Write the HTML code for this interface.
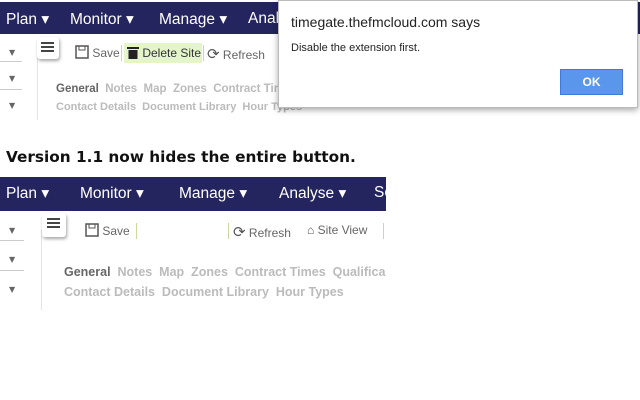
<!DOCTYPE html>
<html><head><meta charset="utf-8"><style>
*{margin:0;padding:0;box-sizing:border-box}
body{width:640px;height:400px;background:#fff;position:relative;overflow:hidden;font-family:"DejaVu Sans","Liberation Sans",sans-serif}
.a{position:absolute;white-space:nowrap}
.nav{background:#24245e;color:#fff;font-size:15px}
.nav span{position:absolute;top:8px;font-family:"Liberation Sans",sans-serif;font-size:15.5px}
.tb{font-size:12px;color:#666;font-family:"Liberation Sans",sans-serif}
.tab{font-size:11.5px;font-weight:bold;color:#bbb;font-family:"Liberation Sans",sans-serif}
.dd{color:#666;font-size:8px}
.ln{background:#ccc;height:1px;width:60px}
.ham{border-radius:3px;box-shadow:1px 2px 3px rgba(0,0,0,.35);background:#fff}
.ham i{display:block;width:13px;height:2px;background:#444;margin:2px 0 0 0}
.sep{width:1px;height:16px;background:#c9d9a0}
</style></head><body>
<div class="a nav" style="left:0;top:2px;width:640px;height:32px">
<span style="left:6px">Plan ▾</span><span style="left:70px">Monitor ▾</span><span style="left:159px">Manage ▾</span><span style="left:248px">Analyse</span>
</div>
<div class="a" style="left:0;top:34px;width:38px;height:90px">
<div class="a dd" style="left:9px;top:14px">▼</div><div class="a ln" style="left:0;top:27px;width:22px"></div>
<div class="a dd" style="left:9px;top:40px">▼</div><div class="a ln" style="left:0;top:55px;width:22px"></div>
<div class="a dd" style="left:9px;top:67px">▼</div>
</div>
<div class="a" style="left:37px;top:54px;width:1px;height:66px;background:#e5e5e5"></div>
<div class="a ham" style="left:37px;top:37px;width:22px;height:22px;padding:3px 4px"><i></i><i></i><i></i></div>
<div class="a tb" style="left:75px;top:45px"><svg width="14" height="14" style="vertical-align:-2px"><rect x="1" y="1" width="12" height="12" fill="none" stroke="#555" stroke-width="1.5"/><rect x="4" y="1" width="6" height="4" fill="none" stroke="#555"/></svg> Save</div>
<div class="a sep" style="left:121px;top:45px"></div>
<div class="a" style="left:124px;top:43px;width:78px;height:20px;background:#e3f5c9"></div>
<div class="a tb" style="left:127px;top:46px;color:#333"><svg width="12" height="13" style="vertical-align:-2px"><rect x="0" y="1" width="12" height="2" fill="#222"/><rect x="1.5" y="4" width="9" height="9" fill="#222"/></svg> Delete Site</div>
<div class="a sep" style="left:203px;top:45px"></div>
<div class="a tb" style="left:207px;top:45px"><span style="font-size:15px;color:#555">⟳</span> Refresh</div>
<div class="a tab" style="left:56px;top:83px"><span style="color:#666">General</span>&nbsp; Notes&nbsp; Map&nbsp; Zones&nbsp; Contract Times</div>
<div class="a tab" style="left:56px;top:101px;font-size:11px">Contact Details&nbsp; Document Library&nbsp; Hour Types</div>
<div class="a" style="left:278px;top:0;width:360px;height:108px;background:#fff;border:1px solid #bbb;box-shadow:0 2px 6px rgba(0,0,0,.35)">
<div class="a" style="left:12px;top:13px;font-size:14px;color:#222;font-family:'Liberation Sans',sans-serif">timegate.thefmcloud.com says</div>
<div class="a" style="left:12px;top:41px;font-size:11px;color:#222;font-family:'Liberation Sans',sans-serif">Disable the extension first.</div>
<div class="a" style="left:281px;top:68px;width:63px;height:26px;background:#5a96eb;border:1px solid #3f7ad6;color:#fff;font-weight:bold;font-size:12px;text-align:center;line-height:24px;font-family:'Liberation Sans',sans-serif">OK</div>
</div>
<div class="a" style="left:6px;top:148px;font-size:15.3px;font-weight:bold;color:#111">Version 1.1 now hides the entire button.</div>
<div class="a nav" style="left:0;top:177px;width:386px;height:34px;overflow:hidden">
<span style="left:6px;top:7px">Plan ▾</span><span style="left:80px;top:7px">Monitor ▾</span><span style="left:179px;top:7px">Manage ▾</span><span style="left:279px;top:7px">Analyse ▾</span><span style="left:374px;top:7px">Se</span>
</div>
<div class="a" style="left:0;top:211px;width:38px;height:100px">
<div class="a dd" style="left:9px;top:15px">▼</div><div class="a ln" style="left:0;top:29px;width:24px"></div>
<div class="a dd" style="left:9px;top:44px">▼</div><div class="a ln" style="left:0;top:59px;width:24px"></div>
<div class="a dd" style="left:9px;top:74px">▼</div>
</div>
<div class="a" style="left:41px;top:230px;width:1px;height:80px;background:#e5e5e5"></div>
<div class="a ham" style="left:42px;top:213px;width:24px;height:24px;padding:3px 5px"><i></i><i></i><i></i></div>
<div class="a tb" style="left:85px;top:223px"><svg width="14" height="14" style="vertical-align:-2px"><rect x="1" y="1" width="12" height="12" fill="none" stroke="#555" stroke-width="1.5"/><rect x="4" y="1" width="6" height="4" fill="none" stroke="#555"/></svg> Save</div>
<div class="a sep" style="left:136px;top:223px"></div>
<div class="a sep" style="left:228px;top:223px"></div>
<div class="a tb" style="left:233px;top:223px"><span style="font-size:15px;color:#555">⟳</span> Refresh</div>
<div class="a tb" style="left:307px;top:223px"><span style="font-size:12px;color:#555">⌂</span> Site View</div>
<div class="a sep" style="left:383px;top:223px"></div>
<div class="a tab" style="left:64px;top:265px;font-size:12.5px"><span style="color:#666">General</span>&nbsp; Notes&nbsp; Map&nbsp; Zones&nbsp; Contract Times&nbsp; Qualifica</div>
<div class="a tab" style="left:64px;top:285px;font-size:12.5px">Contact Details&nbsp; Document Library&nbsp; Hour Types</div>
</body></html>
